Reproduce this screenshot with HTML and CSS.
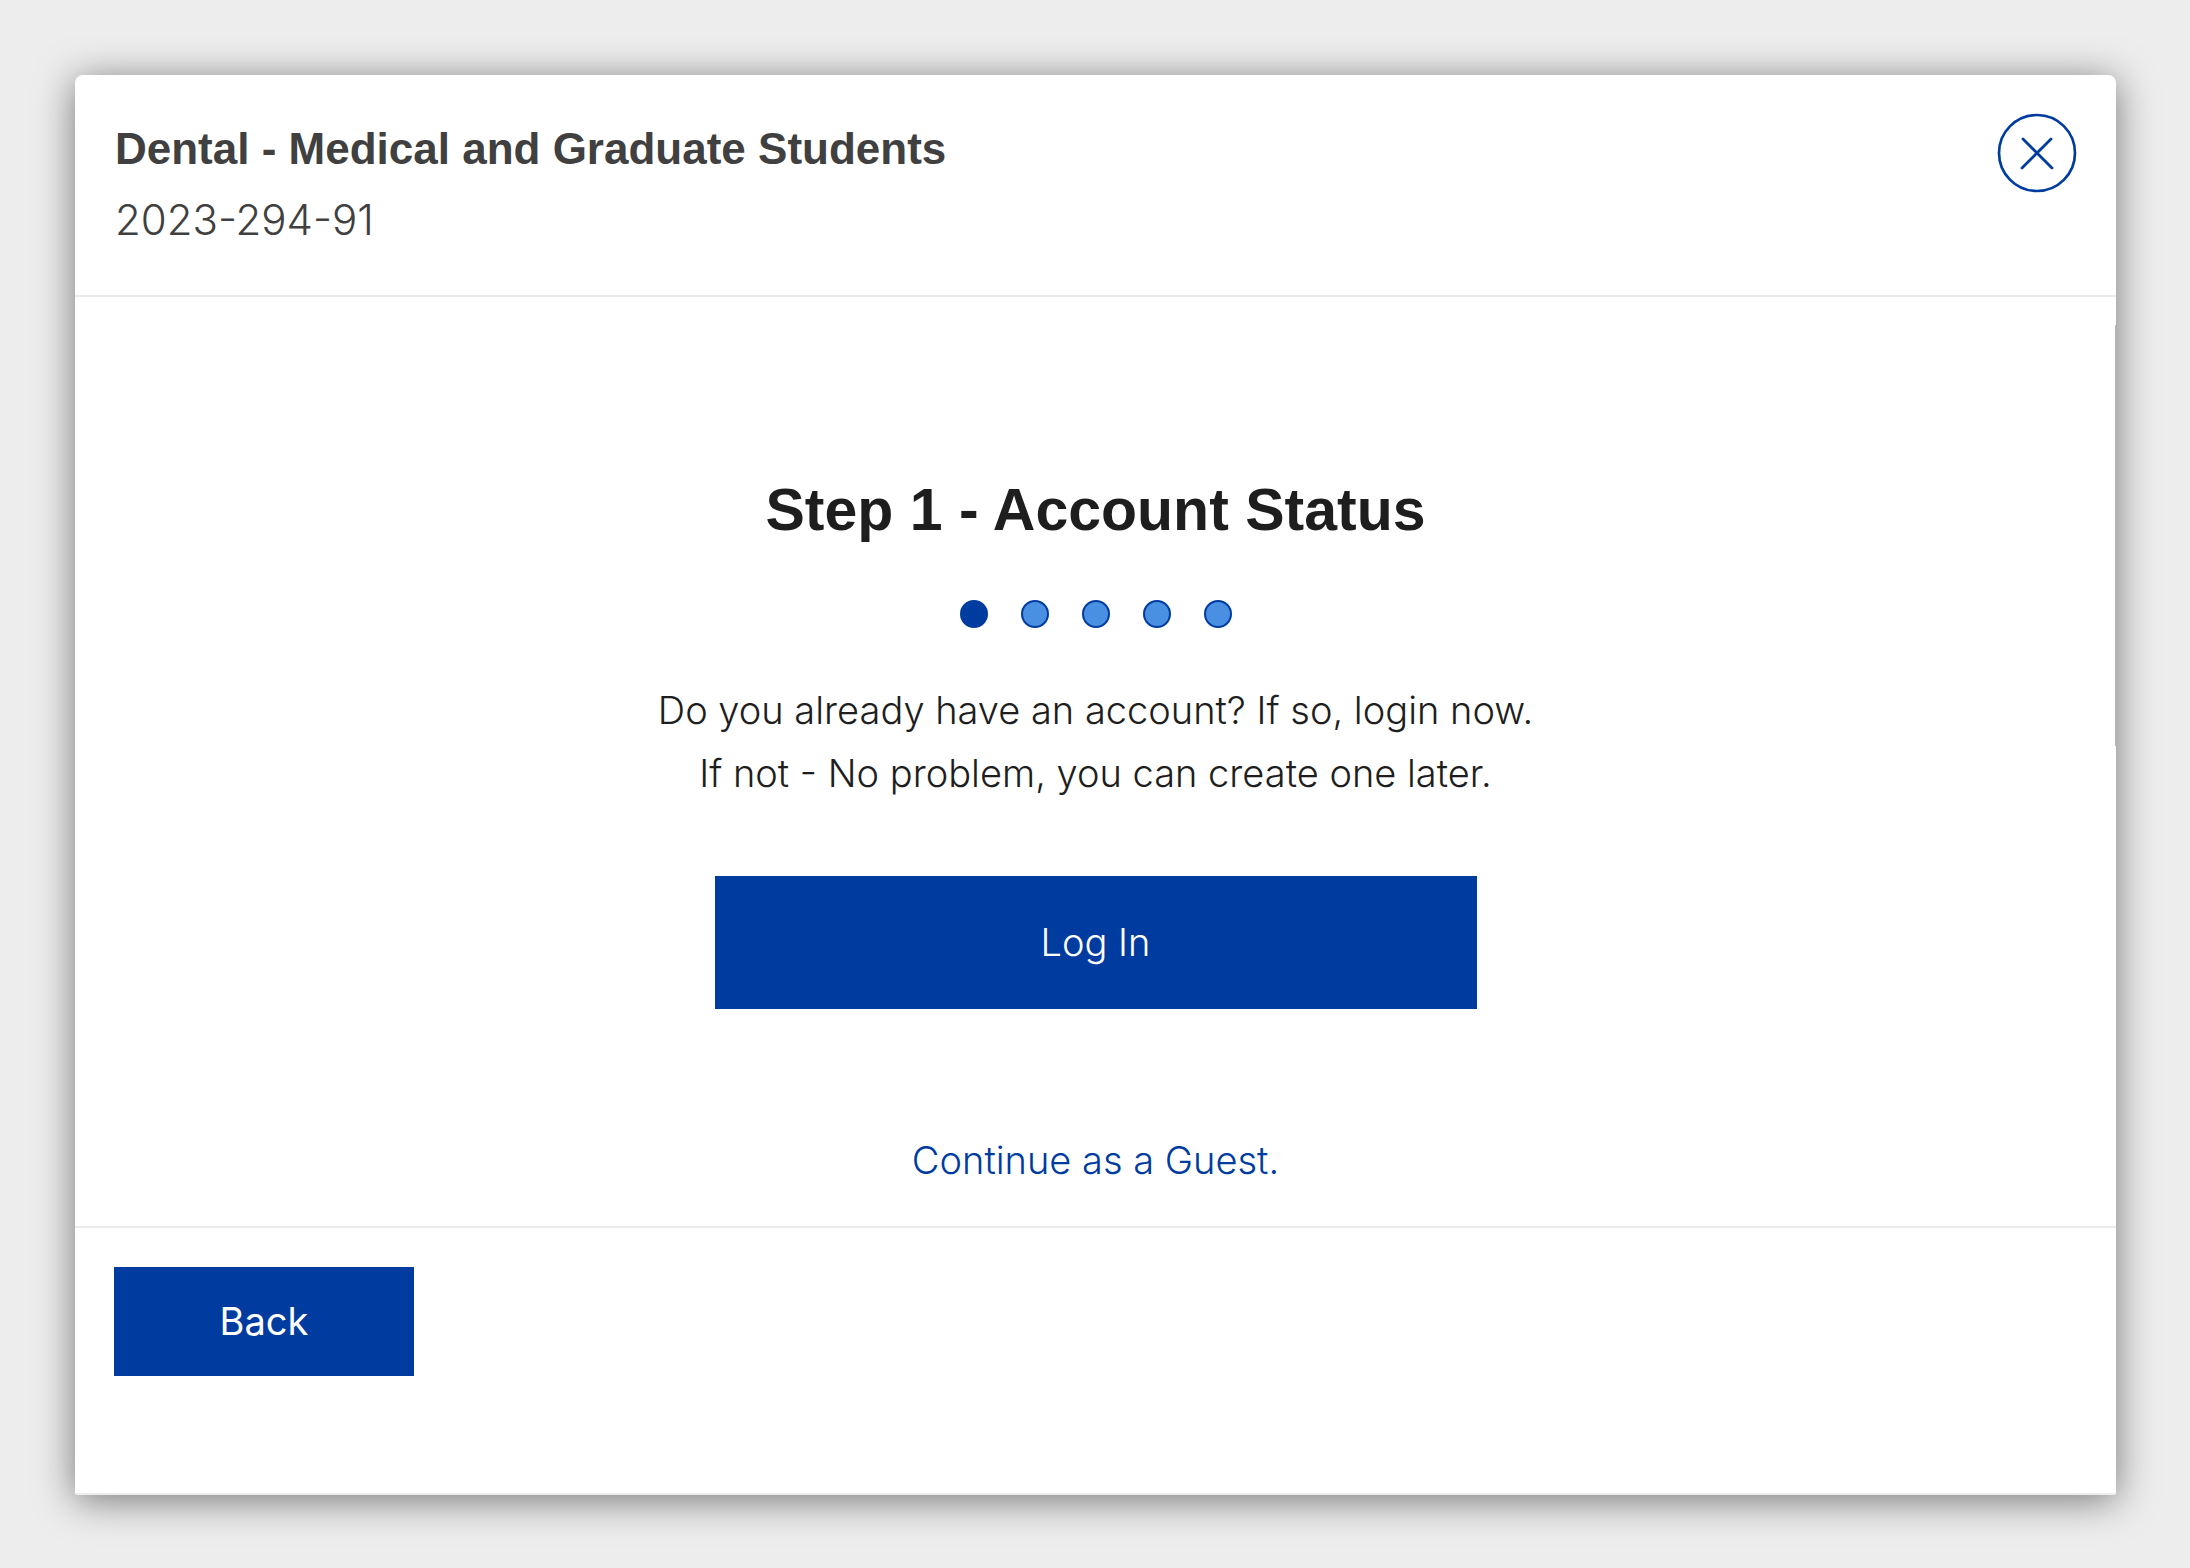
FILE: index.html
```html
<!DOCTYPE html>
<html lang="en">
<head>
<meta charset="utf-8">
<meta name="viewport" content="width=device-width, initial-scale=1">
<title>Step 1 - Account Status</title>
<link rel="stylesheet" href="styles.css">
</head>
<body>
<main class="dialog">
  <header class="dialog-header">
    <div>
      <h1 class="event-name">Dental - Medical and Graduate Students</h1>
      <p class="event-code">2023-294-91</p>
    </div>
    <button class="close" type="button" aria-label="Close">
      <svg viewBox="0 0 80 80" fill="none" stroke="currentColor" stroke-linecap="round" aria-hidden="true">
        <circle cx="40" cy="40" r="38" stroke-width="2.7"/>
        <path d="M26 26 55 55M54 26 25 55" stroke-width="2.8"/>
      </svg>
    </button>
  </header>
  <section class="dialog-body">
    <h2 class="step-title">Step 1 - Account Status</h2>
    <ol class="steps" aria-label="Progress">
      <li class="step current" aria-current="step"></li>
      <li class="step"></li>
      <li class="step"></li>
      <li class="step"></li>
      <li class="step"></li>
    </ol>
    <p class="prompt">Do you already have an account? If so, login now.<br>If not - No problem, you can create one later.</p>
    <button class="button login" type="button">Log In</button>
    <a class="guest" href="#guest">Continue as a Guest.</a>
  </section>
  <footer class="dialog-footer">
    <button class="button back" type="button">Back</button>
  </footer>
</main>
</body>
</html>
```
FILE: styles.css
```css
* {
  box-sizing: border-box;
}

body {
  display: flex;
  min-height: 100vh;
  margin: 0;
  padding: 75px 74px 73px 75px;
  background: #ededed;
  color: #1e1e1e;
  font-family: "Inter", "Liberation Sans", sans-serif;
  font-size: 38px;
  font-weight: 300;
  line-height: 63px;
}

h1, h2, p, ol {
  margin: 0;
  padding: 0;
}

.dialog {
  display: flex;
  flex: 1;
  flex-direction: column;
  background: #fff;
  border-bottom: 2px solid #ededed;
  border-radius: 8px 8px 2px 2px;
  box-shadow: 0 5px 38px rgba(0, 0, 0, 0.5);
}

.dialog-header {
  display: flex;
  align-items: flex-start;
  justify-content: space-between;
  padding: 38px 39px 40px 40px;
  border-bottom: 2px solid #ebebeb;
  color: #404040;
  line-height: 71px;
}

.event-name {
  font-family: "Liberation Sans", Arial, sans-serif;
  font-size: 44px;
  font-weight: 700;
}

.event-code {
  font-size: 42px;
}

.close {
  width: 80px;
  height: 80px;
  padding: 0;
  border: 0;
  background: none;
  color: #003ca0;
  cursor: pointer;
}

.close svg {
  display: block;
}

.dialog-body {
  position: relative;
  display: flex;
  flex-direction: column;
  align-items: center;
  padding: 177px 40px 34px;
  border-bottom: 2px solid #ebebeb;
  text-align: center;
}

/* scroll thumb along the right edge */
.dialog-body::after {
  content: "";
  position: absolute;
  top: 28px;
  right: 0;
  width: 1px;
  height: 421px;
  background: #b8b8b8;
}

.step-title {
  font-family: "Liberation Sans", Arial, sans-serif;
  font-size: 59px;
  font-weight: 700;
  line-height: 72px;
}

.steps {
  display: flex;
  gap: 33px;
  margin: 54px 0 51px;
  list-style: none;
}

.step {
  width: 28px;
  height: 28px;
  border: 2px solid #003ca0;
  border-radius: 50%;
  background: #4a90e2;
}

.current {
  background: #003ca0;
}

.button {
  border: 0;
  background: #003ca0;
  color: #fff;
  font: inherit;
  cursor: pointer;
}

.login {
  width: 762px;
  max-width: 100%;
  margin: 71px 0 120px;
  padding: 35px;
}

.guest {
  color: #003ca0;
  text-decoration: none;
}

.dialog-footer {
  padding: 39px;
}

.back {
  width: 300px;
  padding: 23px;
  font-weight: 400;
}
```
